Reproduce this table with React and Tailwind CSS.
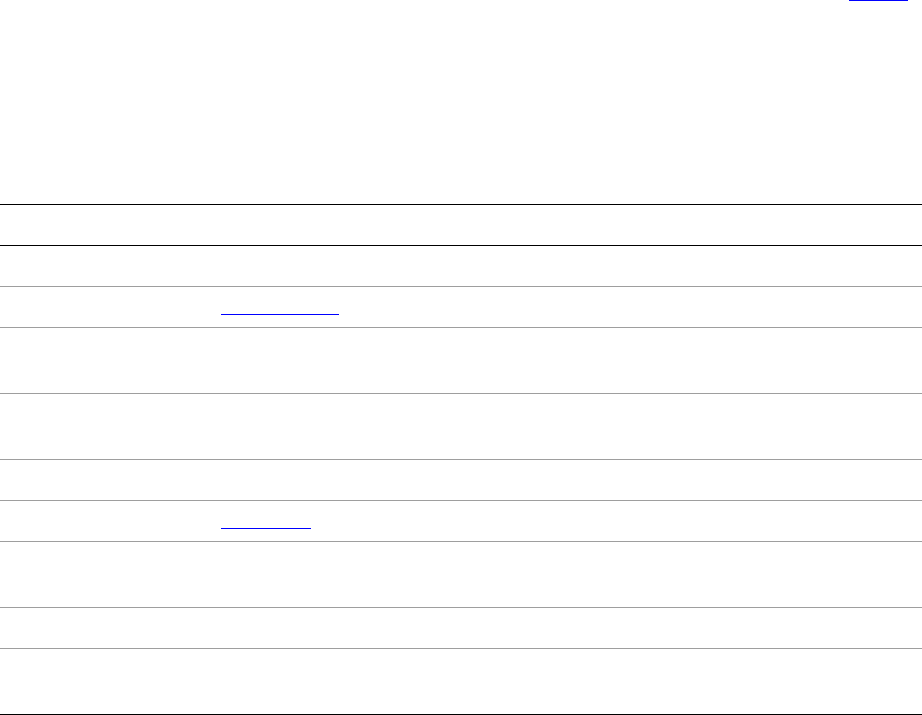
export default function App() {
  const rows = [
    { name: "Name", value: "The display name of the package.", lines: 1 },
    { name: "Homepage", link: "API documentation", lines: 1 },
    {
      name: "Description",
      value: "A short summary of what the package does,",
      value2: "shown in search results and listings.",
      lines: 2,
    },
    {
      name: "Keywords",
      value: "A list of words that help people find",
      value2: "the package when searching the registry.",
      lines: 2,
    },
    { name: "Version", value: "2.4.1", lines: 1 },
    { name: "Docs", link: "Read the docs", lines: 1 },
    {
      name: "License",
      value: "The terms under which the package",
      value2: "may be used and distributed.",
      lines: 2,
    },
    { name: "Author", value: "Maintainers team", lines: 1 },
    {
      name: "Engines",
      value: "The versions of the runtime that",
      value2: "the package is known to work with.",
      lines: 2,
    },
  ];

  // link text is not painted in the reference, only its blue rule shows
  const linkCls =
    "block leading-[19px] border-b border-[#0000ff] text-transparent";

  return (
    <div className="min-h-screen bg-white font-['Liberation_Sans',Arial,sans-serif] text-[14px] leading-[24.5px] text-transparent">
      {/* Header */}
      <header className="h-[204px] flex flex-col">
        <div className="flex justify-end items-start pr-[14px] -mt-[19px]">
          <a href="#" className={linkCls}>
            Edit page
          </a>
        </div>
        <div className="px-2 pt-10">
          <h1 className="text-[28px] leading-[36px] font-bold">Package details</h1>
          <p className="mt-3">Fields that describe the package and how it is published.</p>
        </div>
      </header>

      {/* Table */}
      <div className="w-full">
        <div className="flex h-[42px] border-y border-black">
          <div className="w-[213px] px-2 py-2 font-bold">Field</div>
          <div className="flex-1 px-2 py-2 font-bold">Value</div>
        </div>
        {rows.map((row, i) => (
          <div
            key={i}
            className={
              "flex border-b " +
              (i === rows.length - 1 ? "border-black " : "border-[#9e9e9e] ") +
              (row.lines === 2 ? "h-[66px]" : "h-[41px]")
            }
          >
            <div className="w-[213px] px-2 py-2">{row.name}</div>
            {row.link ? (
              <div className="flex-1 flex items-start px-2 py-2">
                <a href="#" className={linkCls}>
                  {row.link}
                </a>
              </div>
            ) : (
              <div className="flex-1 px-2 py-2">
                <div>{row.value}</div>
                {row.value2 && <div>{row.value2}</div>}
              </div>
            )}
          </div>
        ))}
      </div>
    </div>
  );
}
